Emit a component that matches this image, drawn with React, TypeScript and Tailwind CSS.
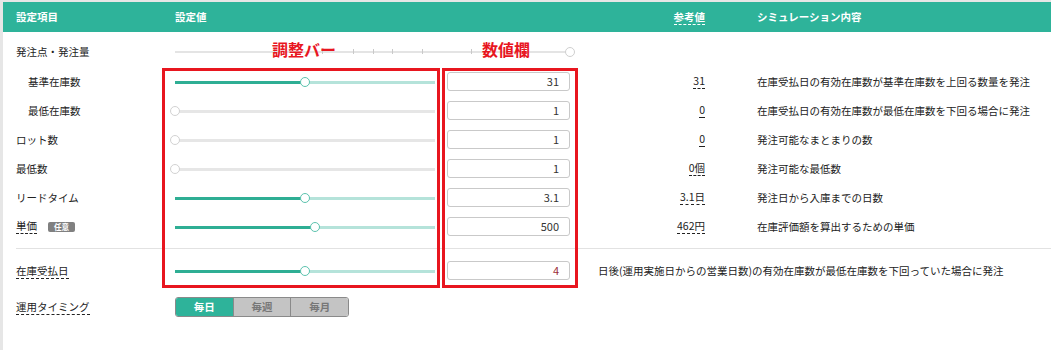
import React from "react";

const FONT = { fontFamily: '"Noto Sans CJK JP", "Noto Sans", sans-serif' };

function Slider({ pct, gray }: { pct: number; gray?: boolean }) {
  return (
    <div className="relative h-[12px] w-[260px]">
      <div className="absolute left-0 right-0 top-[5px] h-[3px] bg-[#b5e3da]" />
      {gray && <div className="absolute left-0 right-0 top-[5px] h-[3px] bg-[#e6e6e6]" />}
      {!gray && (
        <div
          className="absolute left-0 top-[5px] h-[3px] bg-[#2fae94]"
          style={{ width: `${pct}%` }}
        />
      )}
      <div
        className={`absolute top-[1px] h-[10px] w-[10px] rounded-full bg-white border-[1.5px] ${
          gray ? "border-[#d2d2d2]" : "border-[#5cc3ae]"
        }`}
        style={{ left: `calc(${pct}% - 5px)` }}
      />
    </div>
  );
}

function Input({ v, red }: { v: string; red?: boolean }) {
  return (
    <div
      className={`ml-[12px] h-[19px] w-[123px] rounded-[3px] border border-[#c9c9c9] bg-white flex items-center justify-end pr-[10px] text-[11px] ${
        red ? "text-[#9b2c3a]" : "text-[#333]"
      }`}
    >
      {v}
    </div>
  );
}

const rows = [
  { label: "基準在庫数", indent: true, pct: 50, val: "31", ref: "31", desc: "在庫受払日の有効在庫数が基準在庫数を上回る数量を発注" },
  { label: "最低在庫数", indent: true, pct: 0, gray: true, val: "1", ref: "0", desc: "在庫受払日の有効在庫数が最低在庫数を下回る場合に発注" },
  { label: "ロット数", pct: 0, gray: true, val: "1", ref: "0", desc: "発注可能なまとまりの数" },
  { label: "最低数", pct: 0, gray: true, val: "1", ref: "0個", desc: "発注可能な最低数" },
  { label: "リードタイム", pct: 50, val: "3.1", ref: "3.1日", desc: "発注日から入庫までの日数" },
  { label: "単価", badge: true, pct: 54, val: "500", ref: "462円", desc: "在庫評価額を算出するための単価" },
];

const ticks = [24.75, 36.75, 44.5, 49.5, 54.25, 61.75, 74];

export default function App() {
  return (
    <div
      className="relative h-[350px] w-[1051px] overflow-hidden bg-white border-l-[3px] border-t-[2px] border-[#e6e6e6] text-[10.5px] text-[#222]"
      style={FONT}
    >
      {/* header */}
      <div className="flex h-[30px] items-center bg-[#2eb39a] font-bold text-white">
        <div className="w-[172px] pl-[13px]">設定項目</div>
        <div className="w-[397px]">設定値</div>
        <div className="flex w-[133px] justify-end">
          <span className="border-b border-dashed border-white leading-[14px]">参考値</span>
        </div>
        <div className="pl-[52px]">シミュレーション内容</div>
      </div>

      <div className="pt-[4px]">
        {/* 発注点・発注量 */}
        <div className="flex h-[31px] items-center">
          <div className="w-[172px] pl-[13px]">発注点・発注量</div>
          <div className="relative h-[12px] w-[400px]">
            <div className="absolute left-0 right-[5px] top-[5px] h-[2px] bg-[#e4e4e4]" />
            {ticks.map((t) => (
              <div
                key={t}
                className="absolute top-[3px] h-[5px] w-[1px] bg-[#c9c9c9]"
                style={{ left: `${t}%` }}
              />
            ))}
            <div className="absolute right-[0px] top-[1px] h-[10px] w-[10px] rounded-full border-[1.5px] border-[#cfcfcf] bg-white" />
          </div>
        </div>

        {rows.map((r) => (
          <div key={r.label} className="flex h-[29px] items-center">
            <div className={`flex w-[172px] items-center ${r.indent ? "pl-[25px]" : "pl-[13px]"}`}>
              {r.badge ? (
                <>
                  <span className="border-b border-dashed border-[#222] leading-[14px]">{r.label}</span>
                  <span className="ml-[11px] flex h-[10px] w-[27px] items-center justify-center rounded-[2px] bg-[#808080] text-[7.5px] font-bold text-white">
                    任意
                  </span>
                </>
              ) : (
                <span>{r.label}</span>
              )}
            </div>
            <Slider pct={r.pct} gray={r.gray} />
            <Input v={r.val} />
            <div className="flex w-[135px] justify-end">
              <span className="border-b border-dashed border-[#222] leading-[14px]">{r.ref}</span>
            </div>
            <div className="pl-[52px]">{r.desc}</div>
          </div>
        ))}

        <div className="ml-[13px] mt-[7px] h-[1px] bg-[#e2e2e2]" />

        {/* 在庫受払日 */}
        <div className="mt-[7px] flex h-[29px] items-center">
          <div className="w-[172px] pl-[13px]">
            <span className="border-b border-dashed border-[#222] leading-[14px]">在庫受払日</span>
          </div>
          <Slider pct={50} />
          <Input v="4" red />
          <div className="pl-[28px]">
            日後(運用実施日からの営業日数)の有効在庫数が最低在庫数を下回っていた場合に発注
          </div>
        </div>

        {/* 運用タイミング */}
        <div className="mt-[7px] flex h-[29px] items-center">
          <div className="w-[172px] pl-[13px]">
            <span className="border-b border-dashed border-[#222] leading-[14px]">運用タイミング</span>
          </div>
          <div className="flex h-[20px] w-[174px] overflow-hidden rounded-[3px] border border-[#8a8a8a] font-bold">
            <div className="flex flex-1 items-center justify-center bg-[#2eb39a] text-white">毎日</div>
            <div className="flex flex-1 items-center justify-center border-l border-[#8a8a8a] bg-[#c4c4c4] text-[#777]">
              毎週
            </div>
            <div className="flex flex-1 items-center justify-center border-l border-[#8a8a8a] bg-[#c4c4c4] text-[#777]">
              毎月
            </div>
          </div>
        </div>
      </div>

      {/* annotations */}
      <div className="absolute left-[159px] top-[66px] h-[220px] w-[278px] border-[3px] border-[#e8161f]" />
      <div className="absolute left-[439px] top-[66px] h-[220px] w-[136px] border-[3px] border-[#e8161f]" />
      <div className="absolute left-[269px] top-[37px] text-[16px] font-bold leading-[20px] text-[#e8161f]">調整バー</div>
      <div className="absolute left-[479px] top-[37px] text-[16px] font-bold leading-[20px] text-[#e8161f]">数値欄</div>
    </div>
  );
}
